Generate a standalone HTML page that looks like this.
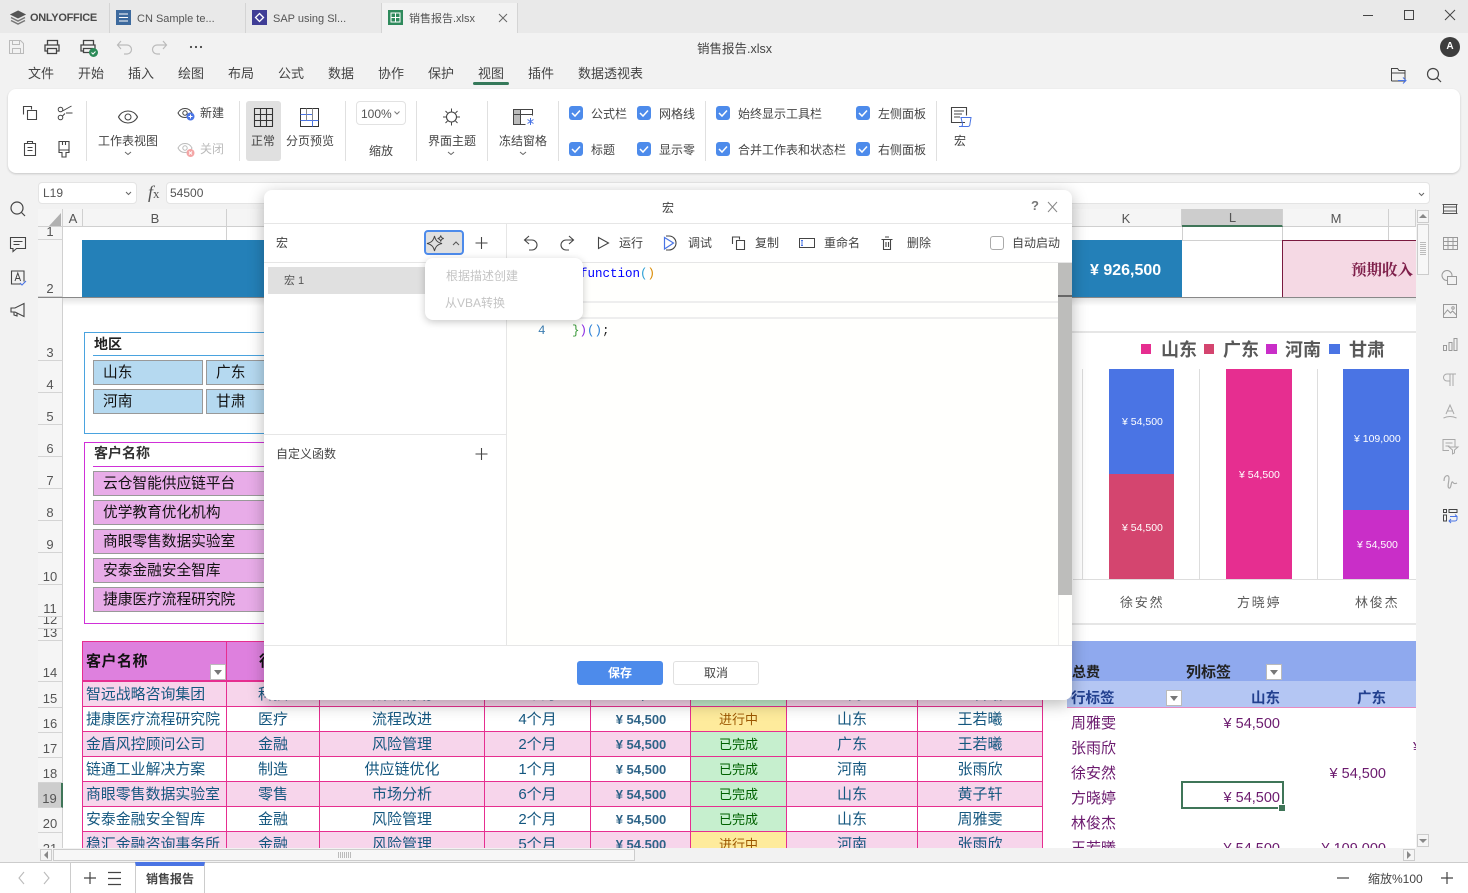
<!DOCTYPE html>
<html lang="zh"><head><meta charset="utf-8"><title>销售报告.xlsx</title>
<style>
html,body{margin:0;padding:0;width:1468px;height:893px;overflow:hidden;background:#f2f2f2}
body{position:relative;font-family:"Liberation Sans","Noto Sans CJK SC",sans-serif;color:#444;font-size:12px}
.a,.t{position:absolute}
.t{white-space:nowrap;line-height:16px}
.rh{position:absolute;left:38px;width:25px;box-sizing:border-box;background:#f5f5f5;border-right:1px solid #d0d0d0;border-bottom:1px solid #d4d4d4;display:flex;align-items:flex-end;justify-content:center;font-size:13px;color:#555;line-height:16px;overflow:hidden}
.rh.u{line-height:14px}
.ch{position:absolute;top:209px;height:18px;box-sizing:border-box;background:#f5f5f5;border-right:1px solid #d0d0d0;border-bottom:1px solid #d0d0d0;text-align:center;font-size:13px;line-height:19px;color:#555}
.m{font-size:13px;color:#444;top:66px}
.r{font-size:12px;color:#444}
.sep{position:absolute;top:101px;width:1px;height:60px;background:#e0e0e0}
#sheet{position:absolute;left:0;top:0;width:1416px;height:848px;clip-path:inset(209px 0 0 38px);background:#fff;overflow:hidden}
.sl{position:absolute;box-sizing:border-box;border:1px solid #999;font-size:14.7px;color:#111;line-height:21px;padding:2px 0 0 9px;white-space:nowrap;overflow:hidden}
table{position:absolute;left:82px;top:681px;border-collapse:collapse;table-layout:fixed;width:960px}
td{height:22px;padding:2px 0 0;border:1px solid #e62e90;text-align:center;font-size:15px;color:#14577f;white-space:nowrap;overflow:hidden;line-height:22px}
td:first-child{text-align:left;padding-left:3px;font-size:14.9px}
tr.p td{background:#f7d5eb}
td.n{font-weight:bold;font-size:13px;color:#2f6488;padding-left:1px}
td.y{background:#feeb9c!important;color:#9c5700;font-size:13px}
td.g{background:#c6efce!important;color:#006100;font-size:13px}
.pv{position:absolute;font-size:15px;color:#6b1a6e;line-height:18px;white-space:nowrap}
.v{position:absolute;font-size:14.500px;color:#6b1a6e;line-height:18px;white-space:nowrap;text-align:right;width:100px}
.lb{position:absolute;color:#fff;font-size:10.5px;line-height:12px;white-space:nowrap;text-align:center}
.nm{position:absolute;top:595px;font-size:13px;letter-spacing:1.800px;color:#595959;line-height:16px;white-space:nowrap}
.lg{position:absolute;top:339px;font-size:18px;font-weight:bold;color:#595959;line-height:22px;white-space:nowrap}
.fb{position:absolute;box-sizing:border-box;background:#fff;border:1px solid #bbb}
.fb:after{content:"";position:absolute;left:3px;top:5px;border:4px solid transparent;border-top:5px solid #777;border-bottom:0}
#dlg{position:absolute;left:264px;top:190px;width:808px;height:510px;background:#fff;border-radius:8px;box-shadow:0 4px 16px rgba(0,0,0,.28);overflow:hidden}
.d{font-size:12px;color:#444}
</style></head><body>

<!-- title bar -->
<div class="a" style="left:0;top:0;width:1468px;height:33px;background:#e9e9e9"></div>
<div class="a" style="left:109px;top:3px;width:1px;height:30px;background:#d4d4d4"></div>
<div class="a" style="left:245px;top:3px;width:1px;height:30px;background:#d4d4d4"></div>
<div class="a" style="left:381px;top:3px;width:137px;height:30px;background:#f2f2f2;border-left:1px solid #d4d4d4;border-right:1px solid #d4d4d4;box-sizing:border-box"></div>
<div class="t" style="left:30px;top:10px;font-size:11px;font-weight:bold;color:#4a4a4a;letter-spacing:-.3px">ONLYOFFICE</div>
<div class="t" style="left:137px;top:11px;font-size:11px;color:#555">CN Sample te...</div>
<div class="t" style="left:273px;top:11px;font-size:11px;color:#555">SAP using Sl...</div>
<div class="t" style="left:409px;top:11px;font-size:11px;color:#555">销售报告.xlsx</div>

<!-- quick bar -->
<div class="t" style="left:697px;top:41px;font-size:12.500px;color:#444">销售报告.xlsx</div>
<div class="a" style="left:1440px;top:37px;width:20px;height:20px;border-radius:50%;background:#3d3d3d;color:#fff;font-size:10px;font-weight:bold;text-align:center;line-height:20px">A</div>

<!-- menu -->
<div class="t m" style="left:28px">文件</div><div class="t m" style="left:78px">开始</div><div class="t m" style="left:128px">插入</div><div class="t m" style="left:178px">绘图</div><div class="t m" style="left:228px">布局</div><div class="t m" style="left:278px">公式</div><div class="t m" style="left:328px">数据</div><div class="t m" style="left:378px">协作</div><div class="t m" style="left:428px">保护</div><div class="t m" style="left:478px">视图</div><div class="t m" style="left:528px">插件</div><div class="t m" style="left:578px">数据透视表</div>
<div class="a" style="left:473px;top:82px;width:36px;height:3px;border-radius:1.5px;background:#35795a"></div>

<!-- ribbon -->
<div class="a" style="left:8px;top:89px;width:1452px;height:84px;background:#fff;border-radius:8px;box-shadow:0 1px 2px rgba(0,0,0,.18)"></div>
<div class="sep" style="left:86px"></div><div class="sep" style="left:239px"></div><div class="sep" style="left:345px"></div><div class="sep" style="left:416px"></div><div class="sep" style="left:487px"></div><div class="sep" style="left:558px"></div><div class="sep" style="left:705px"></div><div class="sep" style="left:936px"></div>
<div class="a" style="left:246px;top:101px;width:35px;height:60px;background:#e0e0e0;border-radius:3px"></div>
<div class="a" style="left:356px;top:101px;width:50px;height:24px;box-sizing:border-box;border:1px solid #e2e2e2;border-radius:4px"></div>
<div class="t r" style="left:98px;top:133px">工作表视图</div>
<div class="t r" style="left:200px;top:105px">新建</div>
<div class="t r" style="left:200px;top:141px;color:#bbb">关闭</div>
<div class="t r" style="left:251px;top:133px">正常</div>
<div class="t r" style="left:286px;top:133px">分页预览</div>
<div class="t r" style="left:361px;top:106px;color:#555">100%</div>
<div class="t r" style="left:369px;top:143px">缩放</div>
<div class="t r" style="left:428px;top:133px">界面主题</div>
<div class="t r" style="left:499px;top:133px">冻结窗格</div>
<div class="t r" style="left:591px;top:106px">公式栏</div>
<div class="t r" style="left:591px;top:142px">标题</div>
<div class="t r" style="left:659px;top:106px">网格线</div>
<div class="t r" style="left:659px;top:142px">显示零</div>
<div class="t r" style="left:738px;top:106px">始终显示工具栏</div>
<div class="t r" style="left:738px;top:142px">合并工作表和状态栏</div>
<div class="t r" style="left:878px;top:106px">左侧面板</div>
<div class="t r" style="left:878px;top:142px">右侧面板</div>
<div class="t r" style="left:954px;top:133px">宏</div>

<!-- formula bar -->
<div class="a" style="left:38px;top:182px;width:99px;height:22px;box-sizing:border-box;background:#fff;border:1px solid #e4e4e4;border-radius:4px"></div>
<div class="t" style="left:43px;top:185px;color:#555">L19</div>
<div class="t" style="left:148px;top:184px;font-family:'Liberation Serif',serif;font-style:italic;font-size:18px;color:#555">f<span style="font-style:normal;font-size:13px">x</span></div>
<div class="a" style="left:166px;top:182px;width:1264px;height:22px;box-sizing:border-box;background:#fff;border:1px solid #e4e4e4;border-radius:4px"></div>
<div class="t" style="left:170px;top:185px;color:#555">54500</div>

<!-- sheet -->
<div id="sheet">
 <div class="a" style="left:63px;top:227px;width:1353px;height:13px;background:#fff"></div>
 <div class="a" style="left:226px;top:227px;width:1px;height:13px;background:#d0d0d0"></div>
 <div class="a" style="left:1182px;top:227px;width:1px;height:13px;background:#d0d0d0"></div>
 <div class="a" style="left:1282px;top:227px;width:1px;height:13px;background:#d0d0d0"></div>
 <div class="a" style="left:1388px;top:227px;width:1px;height:13px;background:#d0d0d0"></div>
 <div class="a" style="left:1182px;top:240px;width:234px;height:1px;background:#d0d0d0"></div>
 <div class="a" style="left:82px;top:240px;width:1100px;height:57px;background:#2480b8"></div>
 <div class="t" style="left:1090px;top:261px;font-size:16px;font-weight:bold;color:#fff;line-height:20px">¥ 926,500</div>
 <div class="a" style="left:1282px;top:240px;width:134px;height:57px;box-sizing:border-box;background:#f5d9e4;border-left:1px solid #7a1a3f;border-top:1px solid #7a1a3f"></div>
 <div class="t" style="left:1351px;top:261px;font-size:15.5px;font-weight:bold;color:#7e1f4a;line-height:20px;font-family:'Liberation Serif','Noto Serif CJK SC',serif">预期收入</div>
 <div class="a" style="left:38px;top:297px;width:1378px;height:1px;background:#888"></div>
 <div class="a" style="left:63px;top:298px;width:1353px;height:8px;background:linear-gradient(#e4e4e4,#fff)"></div>

 <!-- slicer 1 -->
 <div class="a" style="left:84px;top:332px;width:300px;height:102px;box-sizing:border-box;border:1px solid #4aa3df;border-right:0"></div>
 <div class="t" style="left:94px;top:336px;font-size:14px;font-weight:bold;color:#222">地区</div>
 <div class="a" style="left:93px;top:355px;width:260px;height:1px;background:#4aa3df"></div>
 <div class="sl" style="left:93px;top:360px;width:110px;height:25px;background:#b5d9f0">山东</div>
 <div class="sl" style="left:206px;top:360px;width:110px;height:25px;background:#b5d9f0">广东</div>
 <div class="sl" style="left:93px;top:389px;width:110px;height:25px;background:#b5d9f0">河南</div>
 <div class="sl" style="left:206px;top:389px;width:110px;height:25px;background:#b5d9f0">甘肃</div>
 <!-- slicer 2 -->
 <div class="a" style="left:84px;top:442px;width:300px;height:182px;box-sizing:border-box;border:1px solid #d030d8;border-right:0"></div>
 <div class="t" style="left:94px;top:445px;font-size:14px;font-weight:bold;color:#333">客户名称</div>
 <div class="a" style="left:93px;top:466px;width:280px;height:1px;background:#d030d8"></div>
 <div class="sl" style="left:93px;top:471px;width:280px;height:25px;background:#e8ace8">云仓智能供应链平台</div>
 <div class="sl" style="left:93px;top:500px;width:280px;height:25px;background:#e8ace8">优学教育优化机构</div>
 <div class="sl" style="left:93px;top:529px;width:280px;height:25px;background:#e8ace8">商眼零售数据实验室</div>
 <div class="sl" style="left:93px;top:558px;width:280px;height:25px;background:#e8ace8">安泰金融安全智库</div>
 <div class="sl" style="left:93px;top:587px;width:280px;height:25px;background:#e8ace8">捷康医疗流程研究院</div>

 <!-- table -->
 <div class="a" style="left:82px;top:641px;width:960px;height:41px;box-sizing:border-box;background:#de80de;border:1px solid #e62e90;border-bottom:2px solid #e62e90"></div>
 <div class="a" style="left:226px;top:641px;width:1px;height:40px;background:#e62e90"></div>
 <div class="t" style="left:86px;top:654px;font-size:15px;font-weight:bold;color:#111;letter-spacing:.5px">客户名称</div>
 <div class="t" style="left:259px;top:654px;font-size:15px;font-weight:bold;color:#111">行业</div>
 <div class="fb" style="left:210px;top:664px;width:16px;height:16px"></div>
 <table><colgroup><col style="width:144px"><col style="width:93px"><col style="width:165px"><col style="width:106px"><col style="width:100px"><col style="width:96px"><col style="width:131px"><col style="width:125px"></colgroup>
 <tr class="p"><td>智远战略咨询集团</td><td>科技</td><td>战略规划</td><td>3个月</td><td class="n">¥ 54,500</td><td class="g">已完成</td><td>山东</td><td>王若曦</td></tr>
 <tr><td>捷康医疗流程研究院</td><td>医疗</td><td>流程改进</td><td>4个月</td><td class="n">¥ 54,500</td><td class="y">进行中</td><td>山东</td><td>王若曦</td></tr>
 <tr class="p"><td>金盾风控顾问公司</td><td>金融</td><td>风险管理</td><td>2个月</td><td class="n">¥ 54,500</td><td class="g">已完成</td><td>广东</td><td>王若曦</td></tr>
 <tr><td>链通工业解决方案</td><td>制造</td><td>供应链优化</td><td>1个月</td><td class="n">¥ 54,500</td><td class="g">已完成</td><td>河南</td><td>张雨欣</td></tr>
 <tr class="p"><td>商眼零售数据实验室</td><td>零售</td><td>市场分析</td><td>6个月</td><td class="n">¥ 54,500</td><td class="g">已完成</td><td>山东</td><td>黄子轩</td></tr>
 <tr><td>安泰金融安全智库</td><td>金融</td><td>风险管理</td><td>2个月</td><td class="n">¥ 54,500</td><td class="g">已完成</td><td>山东</td><td>周雅雯</td></tr>
 <tr class="p"><td>稳汇金融咨询事务所</td><td>金融</td><td>风险管理</td><td>5个月</td><td class="n">¥ 54,500</td><td class="y">进行中</td><td>河南</td><td>张雨欣</td></tr>
 </table>

 <!-- chart -->
 <div class="a" style="left:1072px;top:331px;width:344px;height:2px;background:#e6e6e6"></div>
 <div class="a" style="left:1072px;top:623px;width:344px;height:2px;background:#e6e6e6"></div>
 <div class="a" style="left:1141px;top:344px;width:10px;height:10px;background:#e62e90"></div><div class="lg" style="left:1161px">山东</div>
 <div class="a" style="left:1204px;top:344px;width:10px;height:10px;background:#d4456f"></div><div class="lg" style="left:1223px">广东</div>
 <div class="a" style="left:1266px;top:344px;width:11px;height:10px;background:#c92ec8"></div><div class="lg" style="left:1285px">河南</div>
 <div class="a" style="left:1329px;top:344px;width:11px;height:10px;background:#4a74e4"></div><div class="lg" style="left:1349px">甘肃</div>
 <div class="a" style="left:1082px;top:369px;width:1px;height:210px;background:#ddd"></div>
 <div class="a" style="left:1199px;top:369px;width:1px;height:210px;background:#ddd"></div>
 <div class="a" style="left:1317px;top:369px;width:1px;height:210px;background:#ddd"></div>
 <div class="a" style="left:1073px;top:579px;width:343px;height:1px;background:#ddd"></div>
 <div class="a" style="left:1109px;top:369px;width:65px;height:105px;background:#4a74e4"></div>
 <div class="a" style="left:1109px;top:474px;width:65px;height:105px;background:#d4456f"></div>
 <div class="a" style="left:1226px;top:369px;width:66px;height:210px;background:#e62e90"></div>
 <div class="a" style="left:1343px;top:369px;width:66px;height:141px;background:#4a74e4"></div>
 <div class="a" style="left:1343px;top:510px;width:66px;height:69px;background:#c92ec8"></div>
 <div class="lb" style="left:1122px;top:416px">¥ 54,500</div>
 <div class="lb" style="left:1122px;top:522px">¥ 54,500</div>
 <div class="lb" style="left:1239px;top:469px">¥ 54,500</div>
 <div class="lb" style="left:1354px;top:433px">¥ 109,000</div>
 <div class="lb" style="left:1357px;top:539px">¥ 54,500</div>
 <div class="nm" style="left:1120px">徐安然</div>
 <div class="nm" style="left:1237px">方晓婷</div>
 <div class="nm" style="left:1355px">林俊杰</div>

 <!-- pivot -->
 <div class="a" style="left:1067px;top:641px;width:349px;height:40px;background:#8fa9ee"></div>
 <div class="a" style="left:1067px;top:681px;width:349px;height:26px;background:#b4c6f3"></div>
 <div class="a" style="left:1067px;top:707px;width:349px;height:1px;background:#e88ac0"></div>
 <div class="t" style="left:1072px;top:664px;font-size:14px;font-weight:bold;color:#222">总费</div>
 <div class="t" style="left:1186px;top:665px;font-size:15px;font-weight:bold;color:#222">列标签</div>
 <div class="fb" style="left:1266px;top:664px;width:16px;height:16px"></div>
 <div class="t" style="left:1071px;top:691px;font-size:14.500px;font-weight:bold;color:#22408f">行标签</div>
 <div class="fb" style="left:1166px;top:690px;width:16px;height:16px"></div>
 <div class="t" style="left:1251px;top:691px;font-size:14.500px;font-weight:bold;color:#22408f">山东</div>
 <div class="t" style="left:1357px;top:691px;font-size:14.500px;font-weight:bold;color:#22408f">广东</div>
 <div class="pv" style="left:1071px;top:715px">周雅雯</div>
 <div class="pv" style="left:1071px;top:740px">张雨欣</div>
 <div class="pv" style="left:1071px;top:765px">徐安然</div>
 <div class="pv" style="left:1071px;top:790px">方晓婷</div>
 <div class="pv" style="left:1071px;top:815px">林俊杰</div>
 <div class="pv" style="left:1071px;top:840px">王若曦</div>
 <div class="v" style="left:1180px;top:715px">¥ 54,500</div>
 <div class="v" style="left:1286px;top:765px">¥ 54,500</div>
 <div class="v" style="left:1180px;top:789px">¥ 54,500</div>
 <div class="v" style="left:1180px;top:840px">¥ 54,500</div>
 <div class="v" style="left:1286px;top:840px">¥ 109,000</div>
 <div class="t" style="left:1413px;top:740px;font-size:15px;color:#6b1a6e">¥</div>
 <div class="a" style="left:1181px;top:781px;width:103px;height:28px;box-sizing:border-box;border:2px solid #3f7558"></div>
 <div class="a" style="left:1279px;top:805px;width:6px;height:6px;background:#3f7558;border:1px solid #fff;box-sizing:content-box;margin:-1px 0 0 -1px"></div>
</div>

<!-- column headers -->
<div class="ch" style="left:38px;width:25px"></div>
<svg class="a" style="left:49px;top:213px" width="13" height="13"><path d="M12 0V13H0z" fill="#b0b0b0"/></svg>
<div class="ch" style="left:63px;width:20px;padding-left:1px">A</div>
<div class="ch" style="left:83px;width:144px;padding-left:1px">B</div>
<div class="ch" style="left:227px;width:140px"></div>
<div class="ch" style="left:980px;width:202px;padding-left:91px">K</div>
<div class="ch" style="left:1182px;width:101px;background:#cdcdcd;border-bottom:2px solid #3f7558;height:18px;line-height:18px;padding-left:1px">L</div>
<div class="ch" style="left:1283px;width:106px;padding-left:1px">M</div>
<div class="ch" style="left:1389px;width:27px"></div>

<!-- row headers -->
<div class="rh u" style="top:227px;height:13px">1</div>
<div class="rh u" style="top:240px;height:57px">2</div>
<div class="rh u" style="top:297px;height:64px">3</div>
<div class="rh u" style="top:361px;height:32px">4</div>
<div class="rh u" style="top:393px;height:32px">5</div>
<div class="rh u" style="top:425px;height:32px">6</div>
<div class="rh u" style="top:457px;height:32px">7</div>
<div class="rh u" style="top:489px;height:32px">8</div>
<div class="rh u" style="top:521px;height:32px">9</div>
<div class="rh u" style="top:553px;height:32px">10</div>
<div class="rh u" style="top:585px;height:32px">11</div>
<div class="rh" style="top:617px;height:12px">12</div>
<div class="rh u" style="top:629px;height:12px">13</div>
<div class="rh" style="top:641px;height:41px">14</div>
<div class="rh" style="top:682px;height:26px">15</div>
<div class="rh" style="top:708px;height:25px">16</div>
<div class="rh" style="top:733px;height:25px">17</div>
<div class="rh" style="top:758px;height:25px">18</div>
<div class="rh" style="top:783px;height:25px;background:#cdcdcd;border-right:2px solid #3f7558">19</div>
<div class="rh" style="top:808px;height:25px">20</div>
<div class="rh" style="top:833px;height:25px">21</div>
<div class="a" style="left:38px;top:297px;width:25px;height:1px;background:#888"></div>

<!-- scrollbars -->
<div class="a" style="left:1416px;top:209px;width:14px;height:653px;background:#f2f2f2"></div>
<div class="a" style="left:1417px;top:210px;width:12px;height:13px;box-sizing:border-box;background:#f5f5f5;border:1px solid #ccc"></div>
<div class="a" style="left:1417px;top:224px;width:12px;height:51px;box-sizing:border-box;background:#f7f7f7;border:1px solid #ccc"></div>
<div class="a" style="left:1420px;top:242px;width:6px;height:14px;background:repeating-linear-gradient(#bbb 0 1px,transparent 1px 2px)"></div>
<div class="a" style="left:1417px;top:834px;width:12px;height:13px;box-sizing:border-box;background:#f5f5f5;border:1px solid #ccc"></div>
<div class="a" style="left:0;top:209px;width:38px;height:653px;background:#f2f2f2"></div>
<div class="a" style="left:38px;top:848px;width:1392px;height:14px;background:#f2f2f2"></div>
<div class="a" style="left:40px;top:849px;width:12px;height:12px;box-sizing:border-box;background:#f5f5f5;border:1px solid #ccc"></div>
<div class="a" style="left:53px;top:849px;width:582px;height:12px;box-sizing:border-box;background:#f7f7f7;border:1px solid #ccc"></div>
<div class="a" style="left:338px;top:852px;width:14px;height:6px;background:repeating-linear-gradient(90deg,#bbb 0 1px,transparent 1px 2px)"></div>
<div class="a" style="left:1403px;top:849px;width:12px;height:12px;box-sizing:border-box;background:#f5f5f5;border:1px solid #ccc"></div>

<!-- bottom bar -->
<div class="a" style="left:0;top:862px;width:1468px;height:31px;background:#fff;border-top:1px solid #ccc;box-sizing:border-box"></div>
<div class="a" style="left:70px;top:863px;width:1px;height:30px;background:#ccc"></div>
<div class="a" style="left:135px;top:862px;width:70px;height:31px;box-sizing:border-box;border-left:1px solid #ccc;border-right:1px solid #ccc;border-top:4px solid #4a74e4;background:#fff"></div>
<div class="t" style="left:146px;top:871px;font-size:12px;font-weight:bold;color:#444">销售报告</div>
<div class="t" style="left:1368px;top:871px;font-size:12px;color:#444">缩放%100</div>

<!-- chrome icons -->
<svg class="a" style="left:0;top:0" width="1468" height="893" fill="none" stroke="#444" stroke-width="1">
 <!-- logo -->
 <path d="M18 11l7 3.500-7 3.500-7-3.500z" fill="#555" stroke="#555"/><path d="M11 17.500l7 3.500 7-3.500M11 20.500l7 3.500 7-3.500" stroke="#777" stroke-width="1.500"/>
 <!-- tab icons -->
 <rect x="116" y="10" width="15" height="15" fill="#3d6a9e" stroke="none"/><path d="M119 14h9M119 17.500h9M119 21h9" stroke="#fff"/>
 <rect x="252" y="10" width="15" height="15" fill="#3f3d96" stroke="none"/><path d="M259.500 13.500l4 4-4 4-4-4z" stroke="#fff" stroke-width="1.300"/>
 <rect x="388" y="10" width="15" height="15" fill="#2f8a5c" stroke="none"/><rect x="391" y="13" width="9" height="9" stroke="#fff" fill="#2f8a5c"/><path d="M395.500 13v9M391 17.500h9" stroke="#fff"/>
 <path d="M499 14l8 8M507 14l-8 8" stroke="#666"/>
 <!-- window -->
 <path d="M1363 15.500h10"/><rect x="1404.500" y="10.500" width="9" height="9"/><path d="M1445 10l10 10M1455 10l-10 10"/>
 <!-- quick -->
 <g stroke="#bbb"><path d="M9.500 40.500h11l3 3v10h-14z"/><path d="M12.500 40.500v4h7v-4M12.500 53.500v-5h8v5"/></g>
 <path d="M47.500 45v-4.500h10V45M47.500 51h-2.500v-6h14v6h-2.500M47.500 48.500h9v5h-9z" stroke-width="1.300"/>
 <path d="M83.500 45v-4.500h10V45M83.500 51h-2.500v-6h14v6h-2.500M83.500 48.500h9v4h-9z" stroke-width="1.300"/>
 <circle cx="93.500" cy="52.500" r="4.500" fill="#2b8a57" stroke="none"/><path d="M91.500 52.500l1.500 1.500 2.500-2.500" stroke="#fff"/>
 <g stroke="#bbb" stroke-width="1.200"><path d="M118 45h9a4 4 0 0 1 0 9h-3M121 41l-3.500 4 3.500 4"/><path d="M166 45h-9a4 4 0 0 0 0 9h3M163 41l3.500 4-3.500 4"/></g>
 <g fill="#444" stroke="none"><circle cx="191" cy="47" r="1.100"/><circle cx="196" cy="47" r="1.100"/><circle cx="201" cy="47" r="1.100"/></g>
 <!-- folder + search -->
 <path d="M1391.500 81h13M1391.500 81V68.500h6l1.500 2h6v10M1391.500 73h13.500"/>
 <path d="M1398 80.500h8M1403 77.500l3 3-3 3" stroke="#4a74e4"/>
 <circle cx="1433" cy="74" r="5.500" stroke-width="1.200"/><path d="M1437 78l4 4" stroke-width="1.200"/>
 <!-- ribbon icons -->
 <path d="M23.500 114.500v-8h8v3M27.500 110.500h9v9h-9z" stroke-width="1.100"/>
 <circle cx="60.500" cy="109.500" r="2.300"/><circle cx="60.500" cy="117.500" r="2.300"/><path d="M62.500 111l9-5M62.500 116l2.500-2.500M66 113h6.500"/>
 <path d="M24.500 143.500h11v12h-11zM27.500 143.500v-2h5v2M27.500 147.500h5M27.500 150.500h5" stroke-width="1.100"/>
 <path d="M59 141.500h10v8.500h-10zM59 150v2.500h3v4.500h4v-4.500h3V150M62.500 141.500v3.500M65.500 141.500v3.500" stroke-width="1.100"/>
 <path d="M118.500 117c4-8 15-8 19 0-4 8-15 8-19 0z" stroke-width="1.100"/><circle cx="128" cy="117" r="3"/>
 <path d="M125 152l3 2.500 3-2.500" stroke="#666"/>
 <path d="M178 113c3-6 11-6 14 0-3 6-11 6-14 0z"/><circle cx="185" cy="113" r="2.200"/><circle cx="190.500" cy="116.500" r="4" fill="#4a74e4" stroke="none"/><path d="M188.500 116.500h4M190.500 114.500v4" stroke="#fff"/>
 <g stroke="#bbb"><path d="M178 148c3-6 11-6 14 0-3 6-11 6-14 0z"/><circle cx="185" cy="148" r="2.200"/></g><circle cx="190.500" cy="153" r="4" fill="#f4a5a5" stroke="none"/><path d="M189 151.500l3 3M192 151.500l-3 3" stroke="#fff"/>
 <path d="M254.500 108.500h18v18h-18zM254.500 114.500h18M254.500 120.500h18M260.500 108.500v18M266.500 108.500v18" stroke-width="1.100" stroke="#333"/>
 <path d="M300.500 108.500h18v18h-18z" stroke="#333"/><path d="M300.500 114.500h12M300.500 120.500h18M312.500 120.500v6" stroke="#4a74e4"/><path d="M306.500 108.500v12M312.500 108.500v12" stroke="#888"/>
 <path d="M394.500 111.500l2.500 2.500 2.500-2.500" stroke="#777"/>
 <circle cx="451.500" cy="117" r="5" stroke-width="1.100"/><path d="M451.500 108.500v3M451.500 122.500v3M443 117h3M457 117h3M445.500 111l2 2M455.500 121l2 2M457.500 111l-2 2M447.500 121l-2 2"/>
 <path d="M448 152l3 2.500 3-2.500" stroke="#666"/>
 <path d="M513.500 109.500h19v6M513.500 109.500v15h12"/><rect x="513.500" y="109.500" width="7" height="15" fill="#bbb"/><path d="M513.500 114.500h19"/>
 <path d="M530.500 118v7M527.500 119.500l6 4M533.500 119.500l-6 4" stroke="#4a74e4"/>
 <path d="M520 152l3 2.500 3-2.500" stroke="#666"/>
 <!-- macro -->
 <path d="M965 122.500h-13.500v-15h15v8M954 111h10M954 114h8M954 117h6" stroke-width="1.100"/>
 <path d="M961 117.500h10l-1 6q0 3-2 3h-7q1.500 0 1.500-2.500zM959 126.500h2" stroke="#4a74e4"/>
 <!-- checkboxes -->
 <g stroke="none" fill="#4d8beb"><rect x="569" y="106" width="14" height="14" rx="3"/><rect x="569" y="142" width="14" height="14" rx="3"/><rect x="637" y="106" width="14" height="14" rx="3"/><rect x="637" y="142" width="14" height="14" rx="3"/><rect x="716" y="106" width="14" height="14" rx="3"/><rect x="716" y="142" width="14" height="14" rx="3"/><rect x="856" y="106" width="14" height="14" rx="3"/><rect x="856" y="142" width="14" height="14" rx="3"/></g>
 <g stroke="#fff" stroke-width="1.500"><path d="M572 113l3 3 5-5.500M572 149l3 3 5-5.500M640 113l3 3 5-5.500M640 149l3 3 5-5.500M719 113l3 3 5-5.500M719 149l3 3 5-5.500M859 113l3 3 5-5.500M859 149l3 3 5-5.500"/></g>
 <!-- formula chevrons -->
 <path d="M126 192l2.500 2.500 2.500-2.500M1419 193l2.500 2.500 2.500-2.500" stroke="#666"/>
 <!-- left rail -->
 <circle cx="17" cy="208" r="6" stroke-width="1.200"/><path d="M21.500 212.500l3.500 3.500" stroke-width="1.200"/>
 <path d="M10.500 237.500h15v11h-9l-3.500 3v-3h-2.500zM13.500 241.500h9M13.500 244.500h6" stroke-width="1.100"/>
 <path d="M24 281.500v-10.500h-12.500v13h9" stroke-width="1.100"/><path d="M15 281l2.800-8 2.800 8M16 278.500h3.500"/><path d="M20 283l2 2 4-4" stroke="#4a74e4" stroke-width="1.100"/>
 <path d="M11 308h4l9-4.500v13l-9-4.500h-4zM14 312v3l3 1v-3M24 304v12" stroke-width="1.100"/>
 <!-- scroll arrows -->
 <g fill="#888" stroke="none"><path d="M1423 214l-4 4h8zM1423 843l-4-4h8zM44 855l4-4v8zM1411 855l-4-4v8z"/></g>
 <!-- right rail -->
 <path d="M1443.500 204.500h13v9h-13zM1442.500 204.500h15M1442.500 213.500h15M1443.500 207h13M1443.500 211h13" stroke="#555"/>
 <path d="M1443.500 237.500h14v12h-14zM1443.500 241.500h14M1443.500 245.500h14M1448 237.500v12M1453 237.500v12" stroke="#999"/>
 <circle cx="1447" cy="275.500" r="5" stroke="#999"/><rect x="1447.500" y="276.500" width="9" height="8" fill="#f2f2f2" stroke="#999"/>
 <path d="M1443.500 304.500h13v13h-13zM1443.500 315l4-5 3 3 2-2 4 4" stroke="#999"/><circle cx="1453" cy="308" r="1.200" stroke="#999"/>
 <path d="M1443.500 345.500h3v5h-3zM1449 342.500h3v8h-3zM1454 338.500h3v12h-3z" stroke="#999"/>
 <path d="M1450 374h-3a3 3 0 0 0 0 7h3M1450 374v12M1453 374v12M1447 374h9" stroke="#aaa"/>
 <path d="M1446 414l4-9 4 9M1447.500 411h5M1443.500 418q6.500-3 13 0" stroke="#aaa"/>
 <path d="M1455 447v-7.500h-12v11h6M1445.500 443h7M1445.500 446h4M1449 447h9l-3.500 3v3l-2 1v-4z" stroke="#aaa"/>
 <path d="M1444 481c0-6 5-7 5-3 0 4-2 9 0 10s2-5 3-6 1 3 5 1" stroke="#aaa" stroke-width="1.200"/>
 <path d="M1443.500 509.500h3v3h-3zM1449 509.500h8v3h-8zM1443.500 515h3v6h-3z" stroke="#444"/><path d="M1450 516.500h7v2.500a2 2 0 0 1-2 2h-6M1451 519l-2 2 2 2M1455 514.500l2 2" stroke="#4a74e4"/>
 <!-- bottom -->
 <path d="M24 872l-5 6 5 6M44 872l5 6-5 6" stroke="#bbb" stroke-width="1.100"/>
 <path d="M90 872v12M84 878h12" stroke-width="1.200"/>
 <path d="M108 872.500h13M108 878.500h13M108 884.500h13" stroke-width="1.200"/>
 <path d="M1337 878h12" stroke-width="1.200"/><path d="M1447 872v12M1441 878h12" stroke-width="1.200"/>
</svg>

<!-- dialog -->
<div id="dlg">
 <div class="a" style="left:0;top:33px;width:808px;height:1px;background:#e6e6e6"></div>
 <div class="a" style="left:0;top:72px;width:808px;height:1px;background:#e6e6e6"></div>
 <div class="a" style="left:242px;top:33px;width:1px;height:422px;background:#e6e6e6"></div>
 <div class="a" style="left:0;top:244px;width:242px;height:1px;background:#e6e6e6"></div>
 <div class="a" style="left:0;top:455px;width:808px;height:1px;background:#e6e6e6"></div>
 <div class="t d" style="left:398px;top:10px">宏</div>
 <div class="t" style="left:767px;top:8px;font-size:13px;font-weight:bold;color:#777">?</div>
 <div class="t d" style="left:12px;top:45px">宏</div>
 <div class="a" style="left:4px;top:77px;width:238px;height:27px;background:#e0e0e0"></div>
 <div class="t" style="left:20px;top:83px;font-size:11px;color:#555">宏 1</div>
 <div class="t d" style="left:12px;top:256px">自定义函数</div>
 <div class="a" style="left:160px;top:40px;width:40px;height:25px;box-sizing:border-box;background:#e0e0e0;border:2px solid #4d8beb;border-radius:4px"></div>
 <div class="t d" style="left:355px;top:45px">运行</div>
 <div class="t d" style="left:424px;top:45px">调试</div>
 <div class="t d" style="left:491px;top:45px">复制</div>
 <div class="t d" style="left:560px;top:45px">重命名</div>
 <div class="t d" style="left:643px;top:45px">删除</div>
 <div class="a" style="left:726px;top:46px;width:14px;height:14px;box-sizing:border-box;border:1px solid #aaa;border-radius:3px"></div>
 <div class="t d" style="left:748px;top:45px">自动启动</div>
 <!-- editor -->
 <div class="a" style="left:243px;top:73px;width:565px;height:382px;background:#fffffd"></div>
 <div class="a" style="left:243px;top:111px;width:565px;height:18px;box-sizing:border-box;border-top:2px solid #eee;border-bottom:2px solid #eee"></div>
 <div class="t" style="left:308.500px;top:76px;font:12.500px/16px 'Liberation Mono',monospace;color:#00f;white-space:pre">(function<span style="color:#2a9fd6">(</span><span style="color:#d98a00">)</span></div>
 <div class="t" style="left:274px;top:133px;font:12.500px/16px 'Liberation Mono',monospace;color:#3c7db0">4</div>
 <div class="t" style="left:308px;top:133px;font:12.500px/16px 'Liberation Mono',monospace;white-space:pre"><span style="color:#3a9a3a">}</span><span style="color:#8a2be2">)</span><span style="color:#2a7fd6">()</span><span style="color:#222">;</span></div>
 <div class="a" style="left:794px;top:73px;width:14px;height:332px;background:#bdbdbb"></div>
 <div class="a" style="left:794px;top:105px;width:14px;height:2px;background:#666"></div>
 <div class="a" style="left:794px;top:405px;width:1px;height:50px;background:#eee"></div>
 <!-- buttons -->
 <div class="a" style="left:313px;top:471px;width:86px;height:24px;background:#4d8beb;border-radius:3px;color:#fff;font-weight:bold;font-size:12px;text-align:center;line-height:24px">保存</div>
 <div class="a" style="left:409px;top:471px;width:86px;height:24px;box-sizing:border-box;border:1px solid #e0e0e0;border-radius:3px;color:#444;font-size:12px;text-align:center;line-height:22px">取消</div>
 <!-- icons -->
 <svg class="a" style="left:0;top:0" width="808" height="510" fill="none" stroke="#444" stroke-width="1">
  <path d="M784 12l9 10M793 12l-9 10" stroke="#888"/>
  <path d="M170.500 46c1 4.500 3 6.500 7.500 7.500-4.500 1-6.500 3-7.500 7.500-1-4.500-3-6.500-7.500-7.500 4.500-1 6.500-3 7.500-7.500z"/>
  <path d="M176.700 45.500c.5 2 1 2.500 3 3-2 .5-2.500 1-3 3-.5-2-1-2.500-3-3 2-.5 2.500-1 3-3z" fill="#e0e0e0"/>
  <path d="M189 55l3-3 3 3" stroke="#555"/>
  <path d="M217.500 47v12M211.500 53h12" stroke-width="1.100"/>
  <path d="M217.500 258v12M211.500 264h12" stroke-width="1.100"/>
  <path d="M265 46l-4.500 4 4.500 4M261 50h7a5 5 0 0 1 0 10h-3" stroke-width="1.100"/>
  <path d="M305 46l4.500 4-4.500 4M309 50h-7a5 5 0 0 0 0 10h3" stroke-width="1.100"/>
  <path d="M334.500 47.500l10 5.500-10 5.500z" stroke-width="1.100"/>
  <path d="M400.500 47.500l9 5.500-9 6z" stroke="#4a74e4" stroke-width="1.200"/><path d="M402 46h3a7 7 0 0 1 0 14h-3" stroke-width="1.100"/>
  <path d="M468.500 54v-7h7v2.500M472.500 50.500h8v9h-8z" stroke-width="1.100"/>
  <rect x="535.500" y="48.500" width="15" height="9"/><path d="M538 50.500v5M537 50.500h2M537 55.500h2" stroke="#4a74e4"/>
  <path d="M617.500 49.500h11M619.500 49.500v10h7v-10M621 47h4M622 52v5M624.500 52v5" stroke-width="1.100"/>
 </svg>
 <!-- dropdown -->
 <div class="a" style="left:161px;top:68px;width:158px;height:62px;background:#fff;border-radius:8px;box-shadow:0 2px 8px rgba(0,0,0,.22)"></div>
 <div class="t" style="left:182px;top:78px;font-size:12px;color:#c4c4c4">根据描述创建</div>
 <div class="t" style="left:181px;top:105px;font-size:12px;color:#c4c4c4">从VBA转换</div>
</div>
</body></html>
